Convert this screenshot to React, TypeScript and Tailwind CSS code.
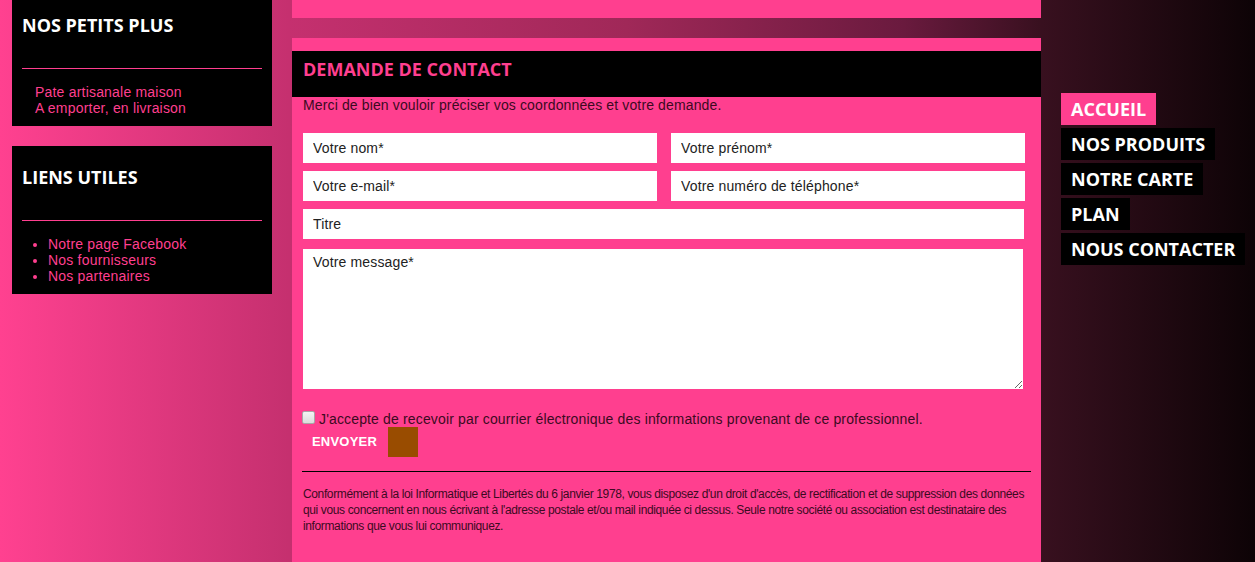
const pink = 'bg-[#ff3f8f]';

function SideBox({ title, children }: { title: string; children: React.ReactNode }) {
  return (
    <div className="w-[260px] bg-black px-[10px] pt-[19px] pb-[10px]">
      <h3 className="h-6 text-[18px] leading-6 font-bold text-white" style={{ fontFamily: '"Open Sans", sans-serif' }}>
        {title}
      </h3>
      <div className="mt-[31px] border-t border-[#ff3f8f]" />
      <div className="pt-[15px] text-[14px] leading-4 tracking-[0.2px] text-[#ff3f8f]">{children}</div>
    </div>
  );
}

const navItems = ['ACCUEIL', 'NOS PRODUITS', 'NOTRE CARTE', 'PLAN', 'NOUS CONTACTER'];

const field = 'h-[30px] bg-white px-[10px] tracking-[0.15px] text-[#222] outline-none placeholder:text-[#222]';

export default function App() {
  return (
    <div
      className="flex h-[562px] w-full overflow-hidden bg-[linear-gradient(90deg,#ff4190_0%,#c5306f_23%,#a02858_50%,#6a1a3e_72%,#38101f_83%,#0d0306_100%)]"
      style={{ fontFamily: '"Liberation Sans", Arial, sans-serif' }}
    >
      {/* left column */}
      <div className="-mt-[6px] flex w-[292px] shrink-0 flex-col gap-[20px] pl-[12px]">
        <SideBox title="NOS PETITS PLUS">
          <div className="pl-[13px]">
            <p>Pate artisanale maison</p>
            <p>A emporter, en livraison</p>
          </div>
        </SideBox>
        <SideBox title="LIENS UTILES">
          <ul className="ml-[26px] list-disc">
            <li>Notre page Facebook</li>
            <li>Nos fournisseurs</li>
            <li>Nos partenaires</li>
          </ul>
        </SideBox>
      </div>

      {/* main column */}
      <div className="flex w-[749px] shrink-0 flex-col">
        <div className={`h-[18px] ${pink}`} />
        <div className={`mt-[20px] flex-1 ${pink} pt-[13px]`}>
          <div className="h-[46px] bg-black pt-[6px] pl-[11px]">
            <h2 className="text-[18px] leading-6 font-bold text-[#ff3f8f]" style={{ fontFamily: '"Open Sans", sans-serif' }}>
              DEMANDE DE CONTACT
            </h2>
          </div>
          <div className="pl-[11px] text-[#3c0a22]">
            <p className="text-[14px] leading-4 tracking-[0.13px]">Merci de bien vouloir préciser vos coordonnées et votre demande.</p>

            <div className="mt-[20px] flex flex-col gap-[8px] text-[14px]">
              <div className="flex gap-[14px]">
                <input className={`${field} w-[354px]`} placeholder="Votre nom*" />
                <input className={`${field} w-[354px]`} placeholder="Votre prénom*" />
              </div>
              <div className="flex gap-[14px]">
                <input className={`${field} w-[354px]`} placeholder="Votre e-mail*" />
                <input className={`${field} w-[354px]`} placeholder="Votre numéro de téléphone*" />
              </div>
              <input className={`${field} w-[721px]`} placeholder="Titre" />
              <textarea
                className="mt-[2px] h-[140px] w-[720px] bg-white px-[10px] pt-[5px] leading-4 tracking-[0.15px] text-[#222] outline-none placeholder:text-[#222]"
                placeholder="Votre message*"
              />
            </div>

            <label className="mt-[22px] -ml-[1px] flex h-4 items-center gap-[4px] text-[14px] leading-4 tracking-[0.15px]">
              <input
                type="checkbox"
                className="-mt-[4px] h-[13px] w-[13px] appearance-none rounded-[2px] border border-[#a8a8a8] bg-[linear-gradient(#f4f4f4,#dcdcdc)]"
              />
              <span>J'accepte de recevoir par courrier électronique des informations provenant de ce professionnel.</span>
            </label>

            <div className="-ml-[1px] flex h-[30px] items-center">
              <button className="px-[10px] text-[13px] font-bold tracking-[0.2px] text-white">ENVOYER</button>
              <div className="ml-[1px] h-[30px] w-[30px] bg-[#994c00]" />
            </div>

            <div className="mt-[14px] -ml-[1px] w-[729px] border-t border-black" />

            <p className="mt-[14px] w-[725px] text-[12px] leading-4 tracking-[-0.37px] text-[#3c0a22]">
              Conformément à la loi Informatique et Libertés du 6 janvier 1978, vous disposez d'un droit d'accès, de rectification et de suppression des données qui vous concernent en nous écrivant à l'adresse postale et/ou mail indiquée ci dessus. Seule notre société ou association est destinataire des informations que vous lui communiquez.
            </p>
          </div>
        </div>
      </div>

      {/* right nav */}
      <nav className="flex flex-1 flex-col items-start gap-[3px] pt-[93px] pl-[20px]">
        {navItems.map((item, i) => (
          <a
            key={item}
            className={`h-[32px] px-[10px] text-[18px] leading-8 font-bold text-white ${i === 0 ? 'bg-[#ff3f8f]' : 'bg-black'}`}
            style={{ fontFamily: '"Open Sans", sans-serif' }}
          >
            {item}
          </a>
        ))}
      </nav>
    </div>
  );
}
